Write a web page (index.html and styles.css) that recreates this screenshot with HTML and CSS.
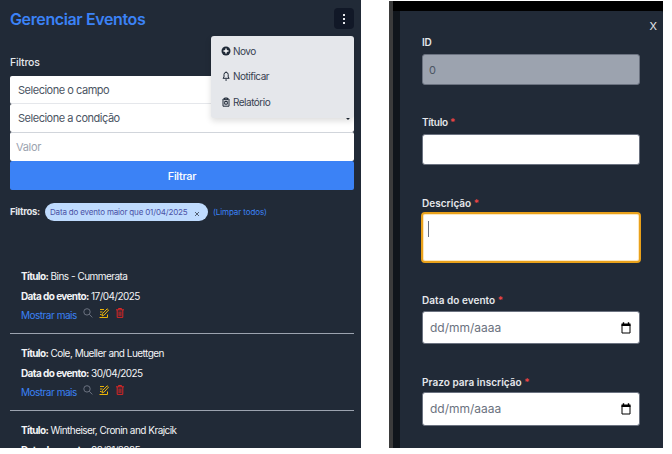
FILE: index.html
```
<!DOCTYPE html>
<html lang="pt-BR">
<head>
<meta charset="utf-8">
<title>Gerenciar Eventos</title>
<link rel="stylesheet" href="styles.css">
</head>
<body>
<svg class="defs" width="0" height="0" aria-hidden="true">
  <symbol id="search" viewBox="0 0 10 10"><circle cx="4" cy="3.9" r="3.2"/><path d="M6.3 6.3 9.3 9.4"/></symbol>
  <symbol id="edit" viewBox="0 0 10 10"><path d="M5 1.5H1M1 4H3.5M1 6.5H2.5M.5 9.5H8.5V6.5M3 8l.5-2.4L8.2.8l1.3 1.3L5.2 7z"/></symbol>
  <symbol id="trash" viewBox="0 0 8 10"><path d="M0 1.8H8M2.5 1.5V.5H5.5V1.5M1.2 2V9.4H6.8V2M3.1 3.5V8M4.9 3.5V8"/></symbol>
  <symbol id="calendar" viewBox="0 0 10 12"><path d="M1 2.5H9V11H1z"/><path class="solid" d="M.5 1.5H9.5V4H.5zM1.8.3H3.2V2H1.8zM6.8.3H8.2V2H6.8z"/></symbol>
</svg>
<div class="screen">
  <main class="events">
    <header class="top">
      <h1>Gerenciar Eventos</h1>
      <div class="menu-wrap">
        <button class="kebab" aria-label="Menu"><i></i><i></i><i></i></button>
        <nav class="menu">
          <a><svg viewBox="0 0 10 10"><circle class="dark" cx="5" cy="5" r="4.5"/><path class="light" d="M5 2.5V7.5M2.5 5H7.5"/></svg><span>Novo</span></a>
          <a><svg viewBox="0 0 10 10"><path d="M2 7.3H8.2L7.2 6V3.5A2.1 2.1 0 0 0 3 3.5V6L2 7.3M4.2 9H6M5.1.5V1.5"/></svg><span>Notificar</span></a>
          <a><svg viewBox="0 0 10 10"><path d="M2 2H8V9.2H2zM3.5 1H6.5V2.8H3.5zM3.7 4.5H6.3V7.2H3.7z"/></svg><span>Relatório</span></a>
        </nav>
      </div>
    </header>
    <h2>Filtros</h2>
    <form class="filter">
      <div class="select first">Selecione o campo</div>
      <div class="select"><span>Selecione a condição</span><svg class="chevron" viewBox="0 0 6 4"><path d="M.8.8 3 3 5.2.8"/></svg></div>
      <div class="value">Valor</div>
      <button type="button" class="apply">Filtrar</button>
    </form>
    <div class="active">
      <b>Filtros:</b>
      <span class="chip"><span>Data do evento maior que 01/04/2025</span><svg viewBox="0 0 6 6"><path d="M1 1 5 5M5 1 1 5"/></svg></span>
      <a>(Limpar todos)</a>
    </div>
    <section class="list">
      <article>
        <p><b>Título:</b> Bins - Cummerata</p>
        <p><b>Data do evento:</b> 17/04/2025</p>
        <div class="actions"><a>Mostrar mais</a><svg class="search"><use href="#search"/></svg><svg class="edit"><use href="#edit"/></svg><svg class="trash"><use href="#trash"/></svg></div>
      </article>
      <article>
        <p><b>Título:</b> Cole, Mueller and Luettgen</p>
        <p><b>Data do evento:</b> 30/04/2025</p>
        <div class="actions"><a>Mostrar mais</a><svg class="search"><use href="#search"/></svg><svg class="edit"><use href="#edit"/></svg><svg class="trash"><use href="#trash"/></svg></div>
      </article>
      <article>
        <p><b>Título:</b> Wintheiser, Cronin and Krajcik</p>
        <p><b>Data do evento:</b> 02/01/2025</p>
      </article>
    </section>
  </main>
  <div class="backdrop">
    <form class="dialog">
      <div class="close">X</div>
      <div class="field id"><label>ID</label><div class="control disabled">0</div></div>
      <div class="field title"><label>Título <em>*</em></label><div class="control"></div></div>
      <div class="field desc"><label>Descrição <em>*</em></label><div class="control focus"><i class="caret"></i></div></div>
      <div class="field when"><label>Data do evento <em>*</em></label><div class="control"><span>dd/mm/aaaa</span><svg class="calendar"><use href="#calendar"/></svg></div></div>
      <div class="field due"><label>Prazo para inscrição <em>*</em></label><div class="control"><span>dd/mm/aaaa</span><svg class="calendar"><use href="#calendar"/></svg></div></div>
    </form>
  </div>
</div>
</body>
</html>
```
FILE: styles.css
```
* { box-sizing: border-box; }
body { margin: 0; background: #fff; color: #e5e7eb; font: 10px/20px Inter, "Liberation Sans", sans-serif; }
h1, h2, p { margin: 0; }
button { border: 0; font: inherit; }
svg { fill: none; stroke: currentColor; flex: none; }
.defs { display: block; }
.screen { display: flex; gap: 28px; height: 454px; overflow: hidden; }
.events { width: 361px; height: 448px; padding: 8px 7px 0 10px; background: #212a37; overflow: hidden; }
.top { display: flex; justify-content: space-between; height: 45px; }
h1 { color: #3b82f6; font-size: 16px; line-height: 22px; font-weight: 600; white-space: nowrap; letter-spacing: -.38px; }
.menu-wrap { position: relative; }
.kebab { display: flex; flex-direction: column; align-items: center; justify-content: center; gap: 2px; width: 20px; height: 21px; padding: 0; border-radius: 4px; background: #111827; }
.kebab i { width: 2px; height: 2px; background: #e5e7eb; }
.menu { position: absolute; z-index: 1; top: 28px; right: 0; width: 143px; height: 82px; padding: 2px 10px; border-radius: 3px; background: #e5e7eb; color: #374151; box-shadow: 0 3px 6px #0002; letter-spacing: -.5px; }
.menu a { display: flex; align-items: center; gap: 2px; height: 25.6px; }
.menu svg { width: 10px; height: 10px; color: #1f2937; }
.dark { fill: #1f2937; stroke: none; }
.light { stroke: #fff; stroke-width: 1.4; }
h2 { font-size: 10.5px; line-height: 20px; font-weight: 500; letter-spacing: -.2px; }
.filter { margin: 3px 0 0; color: #4b5563; font-size: 11px; }
.select, .value { display: flex; align-items: center; justify-content: space-between; height: 28px; padding: 0 3px 0 8px; border-radius: 2px; background: #fff; letter-spacing: -.48px; }
.select.first { border-bottom: 1px solid #e5e7eb; }
.chevron { width: 6px; height: 4px; color: #1f2937; stroke-width: 1.4; }
.value { height: 29px; padding-left: 6px; border-top: 1px solid #d1d5db; color: #9ca3af; letter-spacing: -.3px; }
.apply { display: block; width: 100%; height: 29px; border-radius: 2px; background: #3b82f6; color: #fff; font-size: 11px; font-weight: 500; letter-spacing: -.3px; }
.active { display: flex; align-items: center; height: 18px; margin-top: 13px; white-space: nowrap; font-size: 9.5px; }
.active b { width: 31px; letter-spacing: -.3px; }
.chip { display: flex; align-items: center; justify-content: space-between; width: 163px; height: 18px; margin-left: 4px; padding: 0 8px 0 5px; border-radius: 9px; background: #bfdbfe; color: #4a51a5; font-size: 8px; letter-spacing: -.17px; }
.chip svg { width: 6px; height: 6px; margin-top: 3px; color: #374151; stroke-width: .8; }
.active a { margin-left: 5px; color: #3b82f6; font-size: 8px; letter-spacing: -.1px; }
.list { margin-top: 35px; }
article { height: 77px; padding: 9px 11px 0; border-bottom: 1px solid #9ca3af; white-space: nowrap; letter-spacing: -.56px; word-spacing: .2px; }
article p { height: 20px; color: #f3f4f6; }
article:first-child { height: 78px; padding-top: 10px; }
article b { letter-spacing: -.62px; }
.actions { display: flex; align-items: center; height: 18px; }
.actions a { width: 62px; color: #3b82f6; letter-spacing: -.5px; }
.actions svg { height: 10px; margin-bottom: 4px; }
.search { width: 10px; color: #6b7280; }
.edit { width: 10px; margin-left: 6px; color: #eab308; }
.trash { width: 8px; margin-left: 7px; color: #dc2626; }
.backdrop { width: 274px; height: 447px; margin-top: 1px; padding: 10px 0 0 7px; border-left: 4px solid #3b3b3b; background: linear-gradient(#000 10px, #10151b 10px); }
.dialog { height: 437px; padding: 5px 23px 0 22px; background: #212a37; border-top-right-radius: 2px; }
.close { height: 20px; margin-right: -17px; text-align: right; font-size: 11px; }
.field { display: flex; flex-direction: column; }
label { height: 16px; line-height: 16px; font-size: 10px; font-weight: 600; letter-spacing: .04px; }
em { color: #ef4444; font-style: normal; }
.control { display: flex; align-items: center; justify-content: space-between; height: 31px; margin-top: 4px; padding: 0 8px 0 7px; border: 1px solid #6b7280; border-radius: 3px; background: #fff; color: #6b7280; font-size: 12px; }
.disabled { background: #9ca3af; color: #4b5563; font-size: 11px; padding-left: 6px; }
.id { margin-top: -2px; }
.id label { letter-spacing: -.3px; }
.title { margin-top: 29px; }
.title label { letter-spacing: -.3px; }
.desc { margin-top: 30px; }
.focus { height: 51px; margin: 1px -1px 0; border: 2px solid #e9a11b; align-items: flex-start; padding: 7px 5px; border-radius: 4px; box-shadow: inset 0 0 0 1px #fde7bd; }
.caret { width: 1px; height: 16px; background: #6b7280; }
.when { margin-top: 29px; }
.when .control { height: 33px; margin-top: 3px; }
.due { margin-top: 30px; }
.due .control { height: 34px; margin-top: 2px; }
.calendar { width: 10px; height: 12px; color: #000; }
.solid { fill: currentColor; stroke: none; }
```
